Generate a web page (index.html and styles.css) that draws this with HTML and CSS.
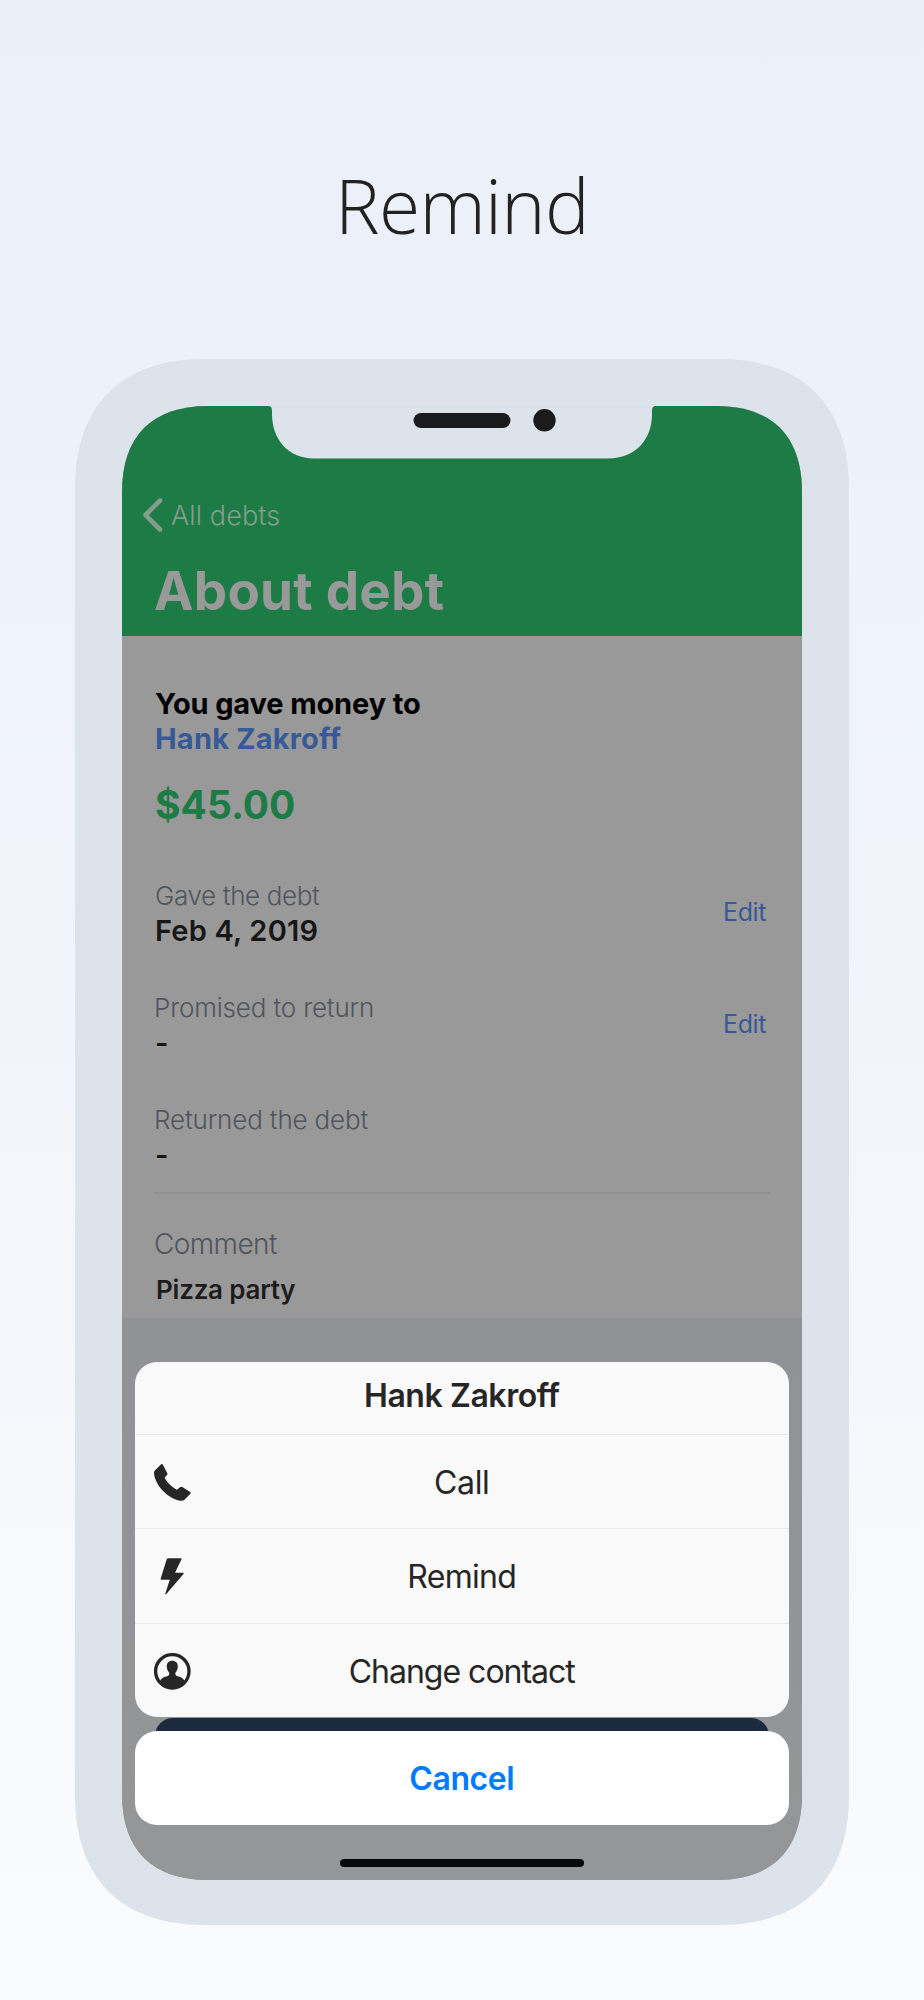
FILE: index.html
```html
<!DOCTYPE html>
<html lang="en">
<head>
<meta charset="utf-8">
<title>Remind</title>
<link rel="stylesheet" href="styles.css">
</head>
<body>
<h1 class="headline">Remind</h1>
<div class="phone">
  <div class="screen">
    <header class="header">
      <div class="nav">
        <svg class="chevron" viewBox="0 0 22 36"><path d="M18 3.500L3.500 18L18 32.500"/></svg>
        <span>All debts</span>
      </div>
      <h2 class="title">About debt</h2>
    </header>
    <main class="content">
      <div class="lead">You gave money to</div>
      <div class="person">Hank Zakroff</div>
      <div class="amount">$45.00</div>
      <div class="fields">
        <div class="field">
          <div><div class="label gave">Gave the debt</div><div class="value">Feb 4, 2019</div></div>
          <a class="edit">Edit</a>
        </div>
        <div class="field">
          <div><div class="label">Promised to return</div><div class="value dash">-</div></div>
          <a class="edit">Edit</a>
        </div>
        <div class="field">
          <div><div class="label">Returned the debt</div><div class="value dash">-</div></div>
        </div>
      </div>
      <div class="comment-label">Comment</div>
      <div class="comment">Pizza party</div>
    </main>
    <div class="footer"><div class="dark-button"></div></div>

    <svg class="notch" viewBox="0 0 388 53">
      <path class="notch-body" d="M0 0H388C385 0 384 1.500 384 5V8C384 33 368 52.500 340 52.500H46C20 52.500 4 33 4 8V5C4 1.500 3 0 0 0Z"/>
      <rect class="notch-line" x="4" y="0" width="380" height="1.500"/>
      <rect class="notch-part" x="145.500" y="7" width="97" height="15" rx="7.500"/>
      <circle class="notch-part" cx="276.500" cy="14.300" r="11.200"/>
    </svg>

    <div class="overlay">
      <div class="sheet">
        <div class="sheet-title">Hank Zakroff</div>
        <div class="action">
          <svg class="icon" viewBox="0 0 37 37"><path d="M7.200 .3Q8 -.2 8.800 .6L13.300 9.300Q13.700 10.400 12.800 11.200L11.200 13Q10.600 14 11.200 15Q16 22.500 23 25.700L26 23.200Q27.200 22.500 28.300 23L36.200 28Q37 28.800 36.400 29.700L30.500 35.800Q29.500 36.800 27.500 36.800C14 36 0 20 0 8.600Q0 7.400 .8 6.500Z"/></svg>
          <span class="call">Call</span>
        </div>
        <div class="action">
          <svg class="icon" viewBox="0 0 37 37"><path d="M14.300 .3H27Q28 .3 27.500 1.200L21 14.800H29Q30.200 14.900 29.500 16L12.300 36Q11 37 11.300 35.500L15.800 21.700H7.200Q6.400 21.500 6.700 20.500L12.700 1.300Q13.100 .3 14.300 .3Z"/></svg>
          <span class="remind">Remind</span>
        </div>
        <div class="action">
          <svg class="icon" viewBox="0 0 37 37"><circle class="ring" cx="18.300" cy="18.300" r="16.700"/><path d="M18.300 7.800C21.800 7.800 23.800 10 23.800 13.500C23.800 16.300 22.700 18.300 21.500 19.500C21.200 21.500 21.400 22.300 23 23.100C26.500 24.300 29.500 25 30.500 28.300C28 32.500 23.500 34.500 18.300 34.500S8.600 32.500 6.100 28.300C7.100 25 10.100 24.300 13.600 23.100C15.200 22.300 15.400 21.500 15.100 19.500C13.900 18.300 12.800 16.300 12.800 13.500C12.800 10 14.800 7.800 18.300 7.800Z"/></svg>
          <span class="change">Change contact</span>
        </div>
      </div>
      <div class="cancel">Cancel</div>
      <div class="home-bar"></div>
    </div>
  </div>
</div>
</body>
</html>
```
FILE: styles.css
```css
* { box-sizing: border-box; }
body {
  margin: 0;
  width: 924px;
  height: 2000px;
  overflow: hidden;
  display: flex;
  flex-direction: column;
  align-items: center;
  background: linear-gradient(#ebeff8 0%, #eef2fb 28%, #f1f4fa 50%, #f8fafd 85%, #fafbfd 100%);
  font-family: Inter, "Liberation Sans", sans-serif;
  color: #262626;
}
.headline {
  margin: 155px 0 104px;
  font: 300 75px/100px "Open Sans", sans-serif;
  letter-spacing: -0.65px;
  color: #222;
}
.phone {
  width: 774px;
  height: 1566px;
  padding: 47px 47px 45px;
  background: #dce3eb;
  clip-path: path("M0 130C0 46 46 0 130 0H644C728 0 774 46 774 130V1436C774 1520 728 1566 644 1566H130C46 1566 0 1520 0 1436Z");
}
.screen {
  position: relative;
  width: 680px;
  height: 1474px;
  display: flex;
  flex-direction: column;
  background: #999;
  clip-path: path("M0 86C0 30 30 0 86 0H594C650 0 680 30 680 86V1388C680 1444 650 1474 594 1474H86C30 1474 0 1444 0 1388Z");
}
.header {
  height: 230px;
  padding-top: 92px;
  background: #1d7b46;
}
.nav {
  display: flex;
  align-items: center;
  gap: 7px;
  height: 34px;
  padding-left: 20px;
  font-size: 27px;
  font-weight: 350;
  letter-spacing: 0.1px;
  color: #849d8d;
}
.chevron {
  width: 22px;
  height: 36px;
  fill: none;
  stroke: #849d8d;
  stroke-width: 4.6;
  stroke-linecap: round;
  stroke-linejoin: round;
}
.title {
  margin: 27px 0 0 32px;
  font-size: 53px;
  line-height: 64px;
  font-weight: 700;
  letter-spacing: 0.2px;
  color: #999;
}
.content { height: 682px; padding: 50px 32px 0; }
.lead, .person { font-size: 29px; line-height: 35px; font-weight: 650; }
.lead { padding-left: 1px; letter-spacing: -0.14px; color: #000; }
.person { padding-left: 1px; letter-spacing: 0.2px; color: #385998; }
.amount {
  margin: 25px 0 50px 1px;
  font-size: 39px;
  line-height: 48px;
  font-weight: 700;
  color: #1d7b46;
}
.fields {
  display: flex;
  flex-direction: column;
  gap: 43px;
  padding-bottom: 20px;
  border-bottom: 2px solid #929293;
}
.field {
  display: flex;
  justify-content: space-between;
  align-items: center;
  height: 69px;
}
.label {
  font-size: 26px;
  line-height: 34px;
  font-weight: 330;
  letter-spacing: -0.16px;
  color: #50555c;
}
.gave { padding-left: 1px; letter-spacing: -0.36px; }
.value {
  padding-left: 1px;
  font-size: 29px;
  line-height: 35px;
  font-weight: 600;
  letter-spacing: 0.2px;
  color: #171717;
}
.edit {
  padding: 0 4px 3px 0;
  font-size: 25px;
  letter-spacing: -0.4px;
  color: #385998;
}
.comment-label {
  margin-top: 33px;
  font-size: 28px;
  line-height: 34px;
  font-weight: 350;
  letter-spacing: -0.6px;
  color: #50555c;
}
.comment {
  margin-top: 12px;
  padding-left: 2px;
  font-size: 26px;
  line-height: 34px;
  font-weight: 600;
  letter-spacing: -0.22px;
  color: #1c1c1c;
}
.footer {
  flex: 1;
  padding: 400px 33px 0;
  background: linear-gradient(#919296, #959697);
}
.dark-button { height: 60px; border-radius: 18px; background: #1c2a40; }
.notch { position: absolute; left: 146px; top: 0; width: 388px; height: 53px; }
.notch-body { fill: #dce3eb; }
.notch-line { fill: #d6dfea; }
.notch-part { fill: #1a1b1d; }
.overlay {
  position: absolute;
  left: 12.500px;
  right: 13px;
  top: 956px;
  display: flex;
  flex-direction: column;
}
.sheet { height: 355px; border-radius: 22px; background: #f9f9f9; }
.sheet-title {
  height: 72px;
  padding-bottom: 6px;
  display: flex;
  align-items: center;
  justify-content: center;
  font-size: 32px;
  font-weight: 600;
  letter-spacing: -0.42px;
}
.action {
  display: grid;
  grid-template-columns: 1fr auto 1fr;
  align-items: center;
  height: 94.330px;
  padding: 2px 19.500px 0;
  border-top: 1.500px solid #e9e9ea;
  font-size: 32px;
}
.icon { width: 37px; height: 37px; fill: #262626; }
.ring { fill: none; stroke: #262626; stroke-width: 3.300; }
.call { letter-spacing: -0.3px; }
.remind { letter-spacing: -0.69px; }
.change { letter-spacing: -1px; }
.cancel {
  height: 94px;
  margin-top: 14px;
  display: flex;
  align-items: center;
  justify-content: center;
  border-radius: 22px;
  background: #fff;
  font-size: 32px;
  font-weight: 600;
  letter-spacing: -0.42px;
  color: #007aff;
}
.home-bar {
  align-self: center;
  width: 244px;
  height: 8px;
  margin-top: 34px;
  border-radius: 4px;
  background: #080808;
}
```
